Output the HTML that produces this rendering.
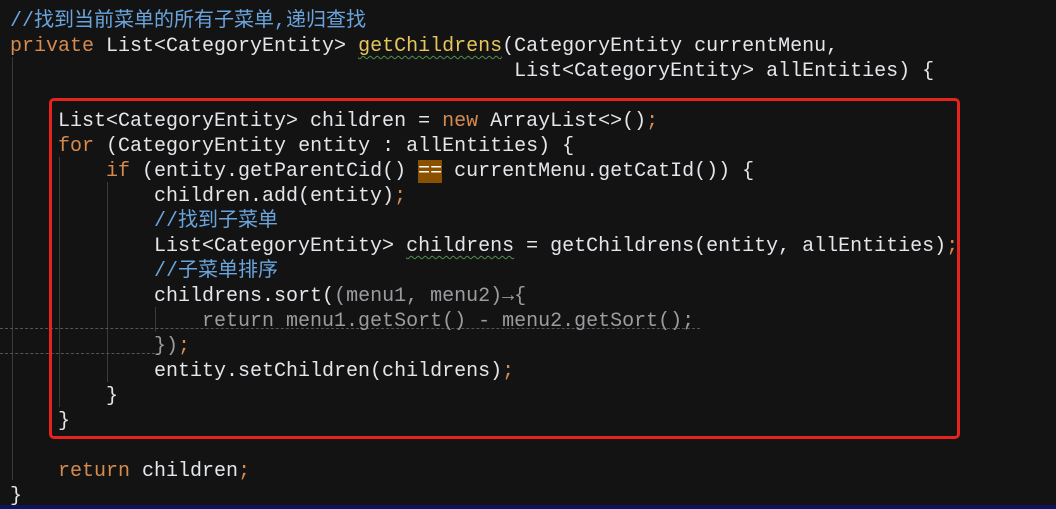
<!DOCTYPE html>
<html><head><meta charset="utf-8"><style>
body{margin:0;width:1056px;height:509px;background:#131313;overflow:hidden;position:relative;font-family:"Liberation Mono","Noto Sans CJK SC",monospace;font-size:20px;color:#e4e6ea}
.l{position:absolute;left:10px;height:25px;line-height:25px;white-space:pre;margin-top:2px}
.k{color:#d58a4e}.f{color:#e6c65a}.c{color:#6aa4dc}.d{color:#9a9ca0}
.w{text-decoration:underline wavy #4f8f4f;text-decoration-thickness:1px;text-underline-offset:4px}
.g{position:absolute;width:1px;background:#3a3a3a}
.eq{background:#8a5200;color:#fff}
</style></head><body>
<div class="g" style="left:12px;top:57px;height:423px"></div>
<div class="g" style="left:59px;top:157px;height:250px"></div>
<div class="g" style="left:107px;top:182px;height:200px"></div>
<div class="g" style="left:155px;top:307px;height:25px"></div>
<div style="position:absolute;left:0;top:328px;width:700px;border-top:1px dashed #555"></div>
<div style="position:absolute;left:0;top:353px;width:160px;border-top:1px dashed #555"></div>
<div class="l c" style="top:7px">//找到当前菜单的所有子菜单,递归查找</div>
<div class="l" style="top:32px"><span class="k">private</span> List&lt;CategoryEntity&gt; <span class="f w">getChildrens</span>(CategoryEntity currentMenu,</div>
<div class="l" style="top:57px">                                          List&lt;CategoryEntity&gt; allEntities) {</div>
<div class="l" style="top:107px">    List&lt;CategoryEntity&gt; children = <span class="k">new</span> ArrayList&lt;&gt;()<span class="k">;</span></div>
<div class="l" style="top:132px">    <span class="k">for</span> (CategoryEntity entity : allEntities) {</div>
<div class="l" style="top:157px">        <span class="k">if</span> (entity.getParentCid() <span class="eq">==</span> currentMenu.getCatId()) {</div>
<div class="l" style="top:182px">            children.add(entity)<span class="k">;</span></div>
<div class="l c" style="top:207px">            //找到子菜单</div>
<div class="l" style="top:232px">            List&lt;CategoryEntity&gt; <span class="w">childrens</span> = getChildrens(entity, allEntities)<span class="k">;</span></div>
<div class="l c" style="top:257px">            //子菜单排序</div>
<div class="l" style="top:282px">            childrens.sort(<span class="d">(menu1, menu2)→{</span></div>
<div class="l d" style="top:307px">                return menu1.getSort() - menu2.getSort();</div>
<div class="l" style="top:332px">            <span class="d">})</span><span class="k">;</span></div>
<div class="l" style="top:357px">            entity.setChildren(childrens)<span class="k">;</span></div>
<div class="l" style="top:382px">        }</div>
<div class="l" style="top:407px">    }</div>
<div class="l" style="top:457px">    <span class="k">return</span> children<span class="k">;</span></div>
<div class="l" style="top:482px">}</div>
<div style="position:absolute;left:49px;top:98px;width:905px;height:335px;border:3px solid #e8231d;border-radius:5px"></div>
<div style="position:absolute;left:0;top:505px;width:1056px;height:4px;background:#0b1460"></div>
</body></html>
